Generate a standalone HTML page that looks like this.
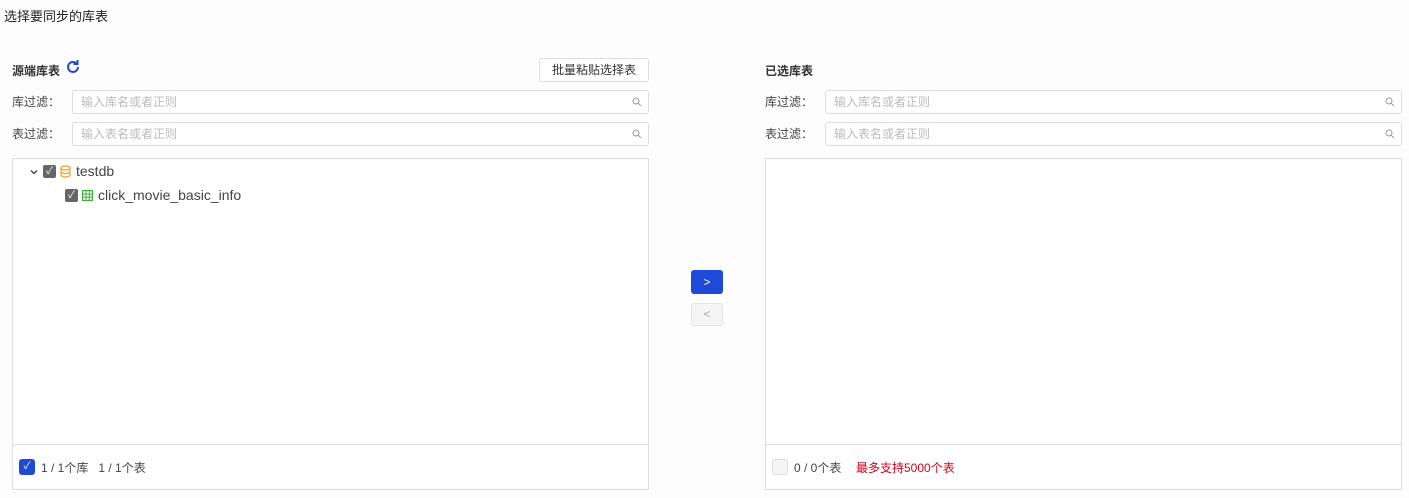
<!DOCTYPE html>
<html><head><meta charset="utf-8"><style>
*{box-sizing:border-box;margin:0;padding:0}
body{width:1409px;height:498px;background:#fdfdfd;font-family:"Liberation Sans","Noto Sans CJK SC",sans-serif;color:#333;position:relative;overflow:hidden;font-size:12px}
.abs{position:absolute}
.title{left:4px;top:6px;font-size:13px;color:#222}
.h{font-size:12px;font-weight:bold;color:#333}
.lbl{font-size:12px;color:#444}
.inp{height:24px;border:1px solid #ddd;border-radius:3px;background:#fff;color:#bbb;font-size:12px;padding:4px 8px;line-height:14px}
.inp svg{position:absolute;right:6px;top:6px}
.box{border:1px solid #ddd;background:#fff}
.ft{border-top:1px solid #ddd;position:absolute;left:0;right:0;bottom:0;height:45px}
.cb{width:13px;height:13px;border-radius:2px;background:#666;color:#fff;font-size:10px;line-height:13px;text-align:center}
</style></head><body>
<div class="abs title">选择要同步的库表</div>

<div class="abs h" style="left:12px;top:62px">源端库表</div>
<svg class="abs" style="left:65px;top:59px" width="16" height="16" viewBox="0 0 16 16"><path d="M13 8a5 5 0 1 1-1.6-3.7" fill="none" stroke="#1f4ad8" stroke-width="2"/><path d="M12.5 1v4h-4" fill="none" stroke="#1f4ad8" stroke-width="2"/></svg>
<div class="abs" style="left:539px;top:58px;width:110px;height:24px;border:1px solid #ddd;border-radius:3px;background:#fff;text-align:center;line-height:22px;font-size:12px;color:#333">批量粘贴选择表</div>

<div class="abs lbl" style="left:12px;top:93px">库过滤：</div>
<div class="abs inp" style="left:72px;top:90px;width:577px">输入库名或者正则<svg width="10" height="10" viewBox="0 0 10 10"><circle cx="4" cy="4" r="3" fill="none" stroke="#999"/><path d="M6.3 6.3L9 9" stroke="#999"/></svg></div>
<div class="abs lbl" style="left:12px;top:125px">表过滤：</div>
<div class="abs inp" style="left:72px;top:122px;width:577px">输入表名或者正则<svg width="10" height="10" viewBox="0 0 10 10"><circle cx="4" cy="4" r="3" fill="none" stroke="#999"/><path d="M6.3 6.3L9 9" stroke="#999"/></svg></div>

<div class="abs box" style="left:12px;top:158px;width:637px;height:332px">
 <svg class="abs" style="left:17px;top:9px" width="8" height="8" viewBox="0 0 8 8"><path d="M1 2.5l3 3 3-3" fill="none" stroke="#444" stroke-width="1.4"/></svg>
 <div class="abs cb" style="left:30px;top:6px">✓</div>
 <svg class="abs" style="left:47px;top:6px" width="11" height="13" viewBox="0 0 11 13"><ellipse cx="5.5" cy="3" rx="4.5" ry="2" fill="none" stroke="#f0a020" stroke-width="1.2"/><path d="M1 3v7c0 1.1 2 2 4.5 2s4.5-.9 4.5-2V3M1 6.5c0 1.1 2 2 4.5 2s4.5-.9 4.5-2" fill="none" stroke="#f0a020" stroke-width="1.2"/></svg>
 <div class="abs" style="left:63px;top:4px;font-size:14px;color:#444">testdb</div>
 <div class="abs cb" style="left:52px;top:30px">✓</div>
 <svg class="abs" style="left:69px;top:31px" width="11" height="11" viewBox="0 0 11 11"><rect x=".6" y=".6" width="9.8" height="9.8" fill="none" stroke="#3bb03b" stroke-width="1.2"/><path d="M.6 4h9.8M.6 7.3h9.8M4 .6v9.8M7.3.6v9.8" stroke="#3bb03b" stroke-width="1"/></svg>
 <div class="abs" style="left:85px;top:28px;font-size:14px;color:#444">click_movie_basic_info</div>
 <div class="ft">
  <div class="abs" style="left:6px;top:14px;width:16px;height:16px;border-radius:3px;background:#1f4ad8;color:#fff;font-size:10px;text-align:center;line-height:16px">✓</div>
  <div class="abs" style="left:28px;top:14px;color:#444">1 / 1个库&nbsp;&nbsp;&nbsp;1 / 1个表</div>
 </div>
</div>

<div class="abs" style="left:691px;top:270px;width:32px;height:24px;border-radius:3px;background:#1f4ad8;color:#fff;text-align:center;line-height:24px;font-size:12px">&gt;</div>
<div class="abs" style="left:691px;top:303px;width:32px;height:23px;border-radius:3px;background:#f5f5f5;border:1px solid #e5e5e5;color:#aaa;text-align:center;line-height:21px;font-size:12px">&lt;</div>

<div class="abs h" style="left:765px;top:62px">已选库表</div>
<div class="abs lbl" style="left:765px;top:93px">库过滤：</div>
<div class="abs inp" style="left:825px;top:90px;width:577px">输入库名或者正则<svg width="10" height="10" viewBox="0 0 10 10"><circle cx="4" cy="4" r="3" fill="none" stroke="#999"/><path d="M6.3 6.3L9 9" stroke="#999"/></svg></div>
<div class="abs lbl" style="left:765px;top:125px">表过滤：</div>
<div class="abs inp" style="left:825px;top:122px;width:577px">输入表名或者正则<svg width="10" height="10" viewBox="0 0 10 10"><circle cx="4" cy="4" r="3" fill="none" stroke="#999"/><path d="M6.3 6.3L9 9" stroke="#999"/></svg></div>
<div class="abs box" style="left:765px;top:158px;width:637px;height:332px">
 <div class="ft">
  <div class="abs" style="left:6px;top:14px;width:16px;height:16px;border-radius:3px;background:#f5f5f5;border:1px solid #ddd"></div>
  <div class="abs" style="left:28px;top:14px;color:#444">0 / 0个表</div>
  <div class="abs" style="left:90px;top:14px;color:#d0021b">最多支持5000个表</div>
 </div>
</div>
</body></html>
